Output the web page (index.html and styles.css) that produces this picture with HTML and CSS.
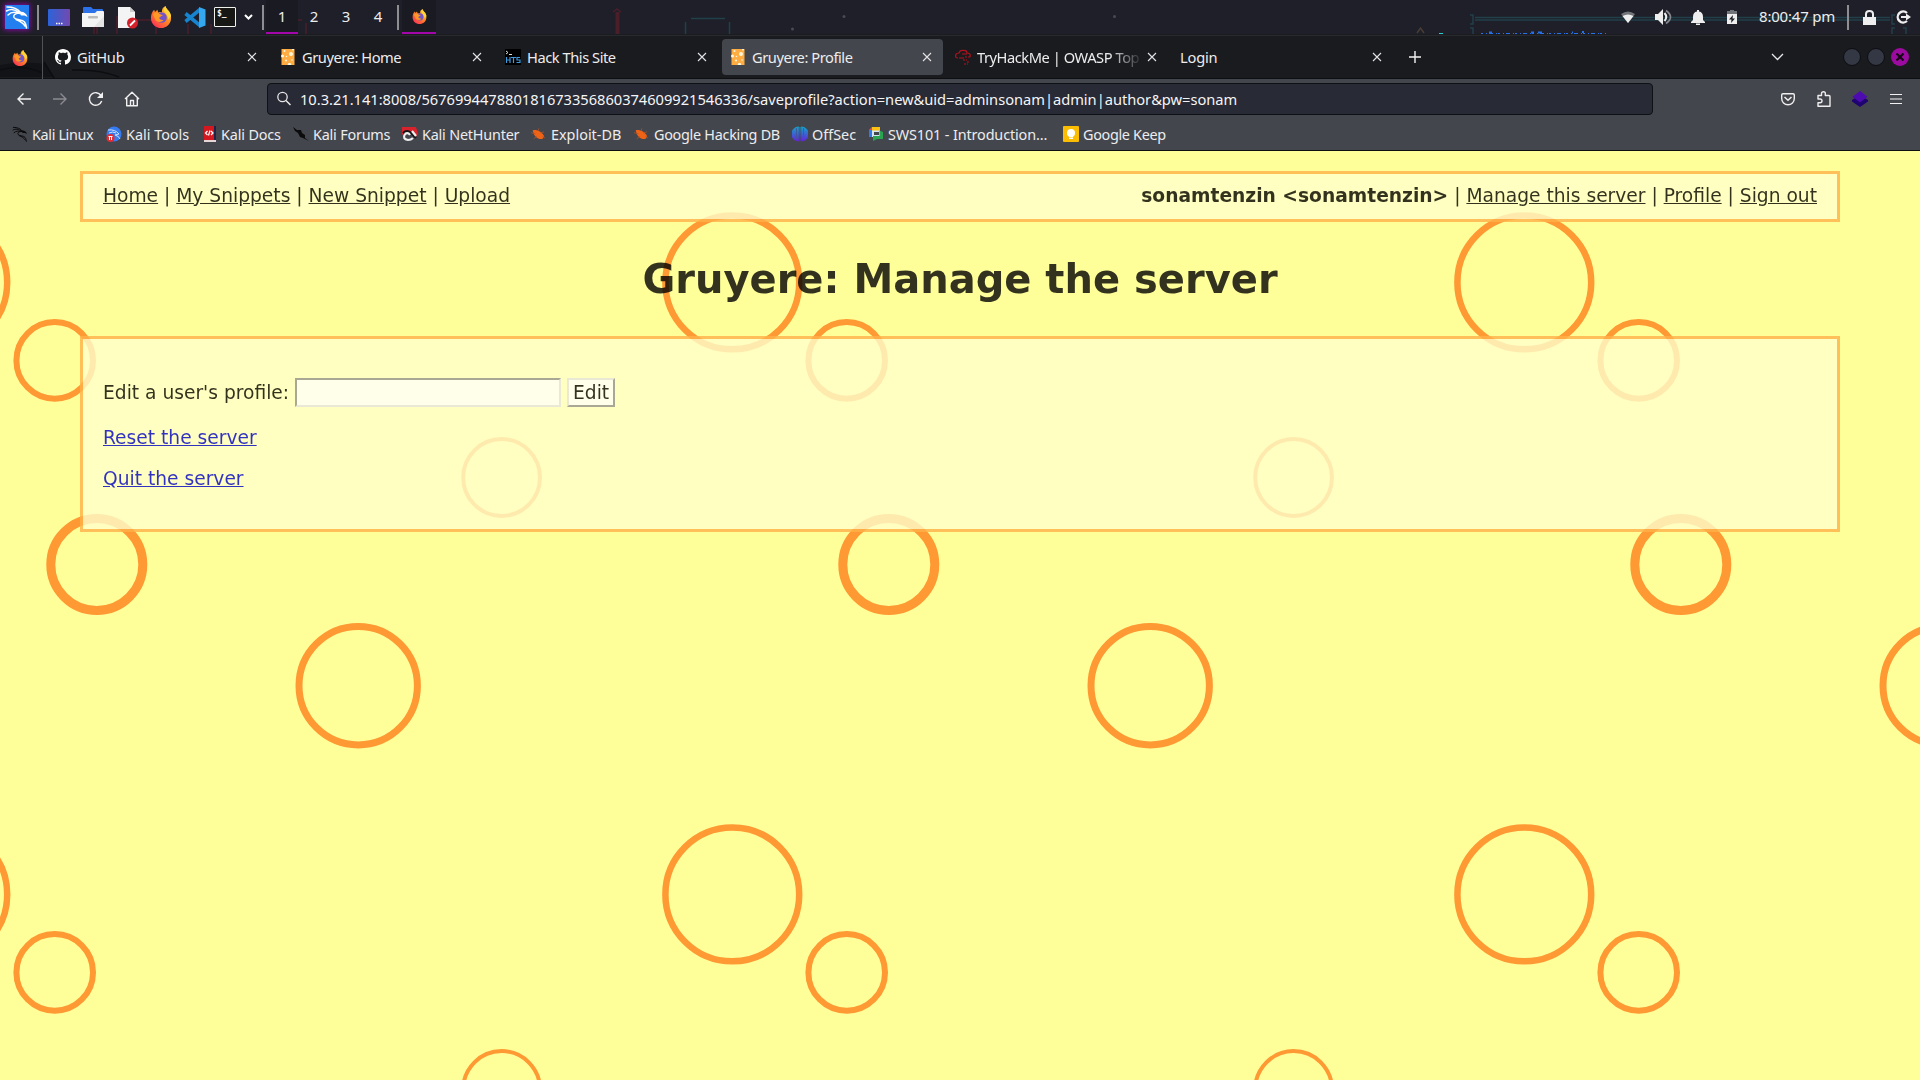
FILE: index.html
```html
<!DOCTYPE html>
<html lang="en">
<head>
<meta charset="utf-8">
<title>Gruyere: Profile</title>
<link rel="stylesheet" href="styles.css">
</head>
<body>
<svg class="defs" width="0" height="0" aria-hidden="true">
  <defs>
    <linearGradient id="fxg" x1="1" y1="0" x2="0.2" y2="1"><stop offset="0" stop-color="#ffdf42"/><stop offset=".5" stop-color="#ff8a22"/><stop offset="1" stop-color="#fa2f58"/></linearGradient>
    <linearGradient id="desk" x1="0" y1="0" x2="1" y2="0"><stop offset="0" stop-color="#2c63d9"/><stop offset="1" stop-color="#7349b0"/></linearGradient>
    <linearGradient id="offg" x1="0" y1="0" x2="0" y2="1"><stop offset="0" stop-color="#12a5c9"/><stop offset="1" stop-color="#6522d8"/></linearGradient>
    <symbol id="firefox" viewBox="0 0 24 24">
      <path fill="url(#fxg)" d="M23 13C23 19.500 18 24 12 24S1 19.500 1 13C1 9 2.500 6 4.500 4L5.500 6.500L8 4L9 7C11 6.500 12 6.500 13 7C12.500 3.500 14.500 1 17 0C17 2.500 19 3.500 21 6C22.500 8 23 10 23 13Z"/>
      <circle cx="12.500" cy="12.500" r="5.800" fill="#7155c9"/>
      <path fill="#ff9725" d="M3 9C6 6 9 7 11 9L14 10L11 12C9 13 11 16 15 15C12 19 6 18 5 13Z"/>
      <path fill="#ffd43a" d="M17 0C17 3 22 6 23 11L20 15C20 9 15 7 15 4Z"/>
    </symbol>
    <symbol id="dragon" viewBox="0 0 24 24">
      <path fill="none" stroke="currentColor" stroke-width="1.500" stroke-linecap="round" d="M2 2C8 2 13 4 15.500 7.500M1.500 6C5 4 10 4 14.500 8M3 10C6 7 11 7 15 8.500M14 8C10 8.500 8 10 9 12.500C10.500 15.500 17 14 19.500 17C21 19 21 21 21.500 23M11 14.500C15 16 18 18 20 21"/>
      <path fill="currentColor" d="M14 7C18 6 21.500 8 22.500 12L19.500 10.500L16 10.500Z"/>
    </symbol>
    <symbol id="cheese" viewBox="0 0 13 16">
      <rect width="13" height="16" fill="#ffad42"/>
      <g fill="#fff6d8"><circle cx="3" cy="2" r="1"/><circle cx="9.500" cy="5" r="2"/><circle cx="1" cy="7" r="1.500"/><circle cx="5" cy="7.500" r=".8"/><circle cx="4.500" cy="11.500" r="1.100"/><circle cx="10.500" cy="11" r=".8"/><circle cx="8" cy="15.500" r="1.700"/><circle cx="11.500" cy=".6" r="1"/></g>
    </symbol>
    <symbol id="close" viewBox="0 0 10 10"><path stroke="#e4e4e6" stroke-width="1.100" d="M1 1L9 9M9 1L1 9"/></symbol>
    <symbol id="bug" viewBox="0 0 16 14"><path fill="#ee6315" d="M2 2C7 1 13 4 15 9L13 12C8 13 3 9 2 2Z"/><path stroke="#b4552a" d="M0 5L5 6M3 12L7 9M8 3L9 0M11 5L15 4M13 9L16 11" stroke-width=".8"/></symbol>
  </defs>
</svg>

<header class="panel">
  <svg class="wall" width="1920" height="35" viewBox="0 0 1920 35" aria-hidden="true">
    <g fill="none" stroke="#4b1f2a" stroke-width="1.500"><path d="M94 24V34M97 24V34M117 34V17H122M137 20H152M156 24V34M188 24V34M211 24V34M280 31L286 20H302M306 23V34"/><path stroke-width="4" d="M617.500 12V34"/><path d="M613 12L617 9L621 12"/></g>
    <g fill="none" stroke="#22404a" stroke-width="1.500"><path d="M691 18.500H725M685.500 22V34M729.500 22V34"/><path d="M1475 17.500H1890M1475 20H1890M1470 15H1473V24H1470M1470 28H1473V34M1895 15H1892V24H1895M1895 28H1892V34M1903 28H1906V34"/></g>
    <path stroke="#2571e8" stroke-width="1" stroke-dasharray="2 3 1 2 4 3 1 1" d="M1481 33.500H1607"/>
    <path stroke="#2571e8" stroke-width="2" d="M1489 32.500H1492M1531 32.500H1534M1538 32.500H1542M1572 32.500H1573M1582 32H1584"/>
    <path stroke="#29cfcd" d="M1439 33.500H1443"/><path fill="none" stroke="#493c36" stroke-width="1.500" d="M1417 33L1420.500 28L1424 33"/>
    <g fill="#484b52"><circle cx="792.500" cy="29" r="1.500"/><circle cx="844" cy="16.500" r="1.500"/><circle cx="1114.500" cy="16.500" r="1.500"/></g>
  </svg>
  <div class="launchers">
    <span class="kali"><svg width="24" height="24"><use href="#dragon"/></svg></span>
    <i class="vbar"></i>
    <svg class="l-desk" width="22" height="17"><rect width="22" height="17" rx="1" fill="url(#desk)"/><path stroke="#fff" stroke-width="1.300" stroke-dasharray="1.500 1" d="M8 14.500H15"/></svg>
    <svg class="l-files" width="22" height="20"><path fill="#2d71e8" d="M1 1Q1 0 2 0H9L11 2H20Q21 2 21 3V8H1Z"/><path fill="#f4f4f4" d="M0 6H13L15 4H21Q22 4 22 5V20H0Z"/><path fill="#e4e4e4" d="M22 9V20H12Z"/><rect x="6" y="9" width="10" height="2.500" rx="1" fill="#bbb"/></svg>
    <svg class="l-text" width="21" height="23"><path fill="#f4f4f4" d="M0 1H12L17 6V22H0Z"/><path fill="#ccc" d="M12 1V6H17Z"/><circle cx="14.500" cy="17" r="5.500" fill="#d3202b"/><path stroke="#fff" stroke-width="1.800" d="M12 19.500L17 14.500"/></svg>
    <svg class="l-fox" width="22" height="22"><use href="#firefox"/></svg>
    <svg class="l-code" width="22" height="21" viewBox="0 0 22 21"><path fill="none" stroke="#1684cf" stroke-width="3.600" stroke-linejoin="round" d="M1.500 6.500L16 18.500M1.500 14.500L16 2.500"/><path fill="#35a7ee" d="M15 0L21.500 2.500V18.500L15 21Z"/></svg>
    <span class="term">$_</span>
    <svg class="l-down" width="9" height="6"><path fill="none" stroke="#fff" stroke-width="2" d="M1 1L4.500 4.500L8 1"/></svg>
    <i class="vbar"></i>
  </div>
  <nav class="spaces"><span class="on">1</span><span>2</span><span>3</span><span>4</span></nav>
  <i class="vbar spacebar"></i>
  <span class="task"><svg width="15" height="15"><use href="#firefox"/></svg></span>
  <div class="tray">
    <svg width="14" height="12"><path fill="#717479" d="M0 3Q7-2 14 3L7 12Z"/><path fill="#eee" d="M1.500 5Q7 2 12.500 5L7 12Z"/></svg>
    <svg class="t-vol" width="17" height="16"><path fill="#eee" d="M0 5H3L8 0V16L3 11H0Z"/><path fill="none" stroke="#eee" stroke-width="2" d="M9.500 4Q13 8 9.500 12"/><path fill="none" stroke="#84878b" stroke-width="1.700" d="M11 1.500Q20 8 11 14.500"/></svg>
    <svg class="t-bell" width="14" height="15"><path fill="#eee" d="M6 0H8V1.500Q12 2 12 7V10L14 12V13H0V12L2 10V7Q2 2 6 1.500ZM5 13.500H9V15H5Z"/></svg>
    <svg class="t-bat" width="10" height="14"><path fill="#717479" d="M3 0H7V1H10V4H0V1H3Z"/><path fill="#eee" d="M0 4H10V14H0Z"/><path fill="#1e1f27" d="M6 5L2 9.500H4.500L4 13L8 8.500H5.500Z"/></svg>
    <span class="clock">8:00:47 pm</span>
    <i class="vbar"></i>
    <svg class="t-lock" width="13" height="15"><path fill="#eee" d="M0 7H13V15H0Z"/><path fill="none" stroke="#eee" stroke-width="2" d="M3 8V4Q3 1 6.500 1T10 4V8"/></svg>
    <svg class="t-out" width="15" height="14"><path fill="none" stroke="#eee" stroke-width="2.400" d="M11 3A5.500 5.500 0 1 0 11 11"/><path fill="#eee" d="M5 6H10V3.500L15 7L10 10.500V8H5Z"/></svg>
  </div>
</header>

<div class="tabs">
  <svg class="shade" width="120" height="17" aria-hidden="true"><path fill="#121317" d="M0 4Q20 0 46 3L54 16H0Z"/><path fill="none" stroke="#0d0e11" stroke-width="1.500" d="M0 9Q24 3 42 12M44 1L54 17M72 9Q100 8 119 16"/></svg>
  <div class="view"><svg width="16" height="16"><use href="#firefox"/></svg></div>
  <div class="tab first"><svg width="16" height="16" viewBox="0 0 16 16"><path fill="#fff" d="M8 0C3.580 0 0 3.580 0 8c0 3.540 2.290 6.530 5.470 7.590.4.070.55-.17.55-.38 0-.19-.01-.82-.01-1.490-2.010.37-2.530-.49-2.690-.94-.09-.23-.48-.94-.82-1.130-.28-.15-.68-.52-.01-.53.63-.01 1.080.58 1.230.82.72 1.210 1.870.87 2.330.66.07-.52.28-.87.51-1.070-1.780-.2-3.640-.89-3.640-3.950 0-.87.31-1.590.82-2.150-.08-.2-.36-1.020.08-2.120 0 0 .67-.21 2.200.82.64-.18 1.320-.27 2-.27s1.360.09 2 .27c1.530-1.040 2.200-.82 2.200-.82.44 1.100.16 1.920.08 2.120.51.56.82 1.270.82 2.150 0 3.070-1.870 3.750-3.650 3.950.29.25.54.73.54 1.480 0 1.070-.01 1.930-.01 2.200 0 .21.15.46.55.38A8.010 8.010 0 0 0 16 8c0-4.420-3.580-8-8-8Z"/></svg><span>GitHub</span><svg class="x" width="10" height="10"><use href="#close"/></svg></div>
  <div class="tab"><svg width="16" height="16"><use href="#cheese"/></svg><span>Gruyere: Home</span><svg class="x" width="10" height="10"><use href="#close"/></svg></div>
  <div class="tab"><svg width="16" height="16"><rect width="16" height="16" fill="#000"/><path fill="none" stroke="#ddd" d="M1 2L3 3.500L1 5M4 5.500H7"/><path fill="none" stroke="#3f9ade" stroke-width="1.200" d="M1.500 8V14M5 8V14M1.500 11H5M6 8.500H11M8.500 8.500V14M15 8.500H12V11H15V13.500H11.500"/></svg><span>Hack This Site</span><svg class="x" width="10" height="10"><use href="#close"/></svg></div>
  <div class="tab active"><svg width="16" height="16"><use href="#cheese"/></svg><span>Gruyere: Profile</span><svg class="x" width="10" height="10"><use href="#close"/></svg></div>
  <div class="tab"><svg width="16" height="16"><path fill="none" stroke="#b5121d" stroke-width="1.200" d="M3 9Q0 9 .8 6Q1 4 4 4Q5 1 8 1.500Q12 1 12 4Q16 4 15 8M4 9H9M7 5H12"/><path stroke="#b5121d" stroke-dasharray="2 1" d="M10 8H15M8 11H12M12 13H15M9 15H13"/></svg><span class="fade">TryHackMe | OWASP Top</span><svg class="x" width="10" height="10"><use href="#close"/></svg></div>
  <div class="tab plain"><span>Login</span><svg class="x" width="10" height="10"><use href="#close"/></svg></div>
  <svg class="plus" width="12" height="12"><path stroke="#f3f3f4" stroke-width="1.400" d="M6 0V12M0 6H12"/></svg>
  <div class="winctl">
    <svg class="all" width="13" height="8"><path fill="none" stroke="#e8e8ea" stroke-width="1.300" d="M1 1L6.500 6.500L12 1"/></svg>
    <i></i><i></i><b><svg width="8" height="8"><path stroke="#120712" stroke-width="2.200" d="M.5.5L7.500 7.500M7.500.5L.5 7.500"/></svg></b>
  </div>
</div>

<div class="toolbar">
  <div class="navbtns">
    <svg width="16" height="16"><path fill="none" stroke="#f1f1f2" stroke-width="1.400" d="M15 8H2M7.500 2.500L2 8L7.500 13.500"/></svg>
    <svg width="16" height="16"><path fill="none" stroke="#8b8c91" stroke-width="1.400" d="M1 8H14M8.500 2.500L14 8L8.500 13.500"/></svg>
    <svg width="16" height="16"><path fill="none" stroke="#f1f1f2" stroke-width="1.400" d="M13.700 10A6.300 6.300 0 1 1 13 4.500"/><path fill="#f1f1f2" d="M15 1V7H9Z"/></svg>
    <svg width="16" height="16"><path fill="none" stroke="#f1f1f2" stroke-width="1.400" stroke-linejoin="round" d="M1 8L8 1.300L15 8M2.700 7V14.700H13.300V7M6.500 14V9.500H9.500V14"/></svg>
  </div>
  <div class="url"><svg width="16" height="16"><circle cx="6.500" cy="6" r="4.700" fill="none" stroke="#e7e7e9" stroke-width="1.300"/><path stroke="#e7e7e9" stroke-width="1.500" d="M10 9.500L14.500 14"/></svg><span>10.3.21.141:8008/567699447880181673356860374609921546336/saveprofile?action=new&amp;uid=adminsonam|admin|author&amp;pw=sonam</span></div>
  <div class="ext">
    <svg width="16" height="16"><path fill="none" stroke="#eee" stroke-width="1.400" d="M3 2.700H13Q14.300 2.700 14.300 4V7.500A6.300 6.300 0 0 1 1.700 7.500V4Q1.700 2.700 3 2.700Z"/><path fill="none" stroke="#eee" stroke-width="1.500" d="M4.500 6L8 9.300L11.500 6"/></svg>
    <svg width="16" height="16"><path fill="none" stroke="#eee" stroke-width="1.400" stroke-linejoin="round" d="M2 4.500H5.500V2.500Q5.500.8 7.500.8T9.300 2.500V4.500H13Q14 4.500 14 5.500V15.200H2V11.700H4Q6 11.700 6 9.800T4 8H2Z"/></svg>
    <svg width="16" height="16"><path fill="#1f0371" d="M0 9L8 4L16 9V10.500L8 16L0 10.500Z"/><path fill="#4d0bb0" d="M8 0L15.500 5.800L8 11.500L.5 5.800Z"/></svg>
    <svg width="16" height="16"><path stroke="#f1f1f2" stroke-width="1.200" d="M2 3.500H14M2 8H14M2 12.500H14"/></svg>
  </div>
</div>

<div class="marks">
  <span class="b1"><svg class="dark" width="16" height="16"><use href="#dragon"/></svg>Kali Linux</span>
  <span class="b2"><svg width="16" height="16"><circle cx="8" cy="8" r="7.500" fill="#367bf0"/><path fill="none" stroke="#cfe0fb" d="M2 4Q9 3 13 8L9 9Q13 10 14 13M3 7Q7 5 10 7"/><circle cx="4.500" cy="12" r="4" fill="#e32c34"/><path stroke="#fff" d="M2.500 10.500H6.500M3.500 10.500V14M5.500 10.500V14"/></svg>Kali Tools</span>
  <span class="b3"><svg width="14" height="16"><path fill="#1e2548" d="M10 0H13V15H10Z"/><path fill="#d51820" d="M1 0H11V14H1Z"/><path fill="#e7d6d8" d="M1 14H13V16H1Z"/><path fill="none" stroke="#fff" stroke-width="1.200" d="M4.500 5L2.500 7L4.500 9M8 5L10 7L8 9M7 4.500L5.500 9.500"/></svg>Kali Docs</span>
  <span class="b4"><svg width="16" height="16"><path fill="#0b0b0c" d="M0 1L4 4L8 4L9 7L12 9L12 12L16 15L10 12L7 11L5 7L2 5Z"/></svg>Kali Forums</span>
  <span class="b5"><svg width="16" height="16"><path fill="#d8222c" d="M0 1H14L16 8L13 12L8 5L3 6L0 9Z"/><path fill="none" stroke="#141415" stroke-width="2" d="M1 7Q5 3 9 7L14 12"/><path fill="none" stroke="#eee" stroke-width="2.200" d="M10 5L14 10M3 8Q0 13 6 14Q9 14 11 12M3 8Q6 6 8 9"/></svg>Kali NetHunter</span>
  <span class="b6"><svg width="14" height="13"><use href="#bug"/></svg>Exploit-DB</span>
  <span class="b7"><svg width="14" height="13"><use href="#bug"/></svg>Google Hacking DB</span>
  <span class="b8"><svg width="16" height="16"><path fill="url(#offg)" d="M6.800.5V15.500A7.500 7.500 0 0 1 6.800.5ZM9.200.5V15.500A7.500 7.500 0 0 0 9.200.5Z"/><path stroke="url(#offg)" d="M8 1L8.010 15"/><path stroke="#3d5793" stroke-width=".8" d="M4.500 2V13M11.500 2V13"/></svg>OffSec</span>
  <span class="b9"><svg width="14" height="14"><path fill="#d5e3f7" d="M3 3H11V10H3Z"/><path fill="#44464d" d="M5 5H10V8H5Z"/><path fill="#fbc014" d="M3 0H11V3.500H3Z"/><path fill="#3179e8" d="M0 3L3 0V10H0Z"/><path fill="#e8453c" d="M0 3L3 0V3Z"/><path fill="#2aa450" d="M10.500 3.500L14 5V12H8L4 14V9H10.500Z"/></svg>SWS101 - Introduction…</span>
  <span class="b10"><svg width="16" height="16"><rect width="16" height="16" rx="1" fill="#fbbc04"/><circle cx="8" cy="7" r="4" fill="#fff"/><path fill="#fff" d="M6 9H10V11H6ZM6 11.500H10V13H6Z"/></svg>Google Keep</span>
</div>

<main class="site">
  <svg class="holes" width="1920" height="929" aria-hidden="true">
    <defs>
      <g id="tile" fill="none" stroke="#ff9933">
        <circle cx="732.300" cy="131.400" r="66.900" stroke-width="6.500"/>
        <circle cx="54.700" cy="209.400" r="38.300" stroke-width="6"/>
        <circle cx="501.600" cy="326.500" r="38.400" stroke-width="4"/>
        <circle cx="96.800" cy="413.500" r="46" stroke-width="9"/>
        <circle cx="358.200" cy="534.700" r="59.200" stroke-width="7"/>
      </g>
    </defs>
    <use href="#tile" x="-792"/><use href="#tile"/><use href="#tile" x="792"/><use href="#tile" x="1584"/>
    <use href="#tile" x="-792" y="612"/><use href="#tile" y="612"/><use href="#tile" x="792" y="612"/><use href="#tile" x="1584" y="612"/>
  </svg>
  <div class="content">
    <div class="menu">
      <span><a>Home</a> | <a>My Snippets</a> | <a>New Snippet</a> | <a>Upload</a></span>
      <span><b>sonamtenzin &lt;sonamtenzin&gt;</b> | <a>Manage this server</a> | <a>Profile</a> | <a>Sign out</a></span>
    </div>
    <h1>Gruyere: Manage the server</h1>
    <div class="box">
      <p class="edit">Edit a user's profile: <input type="text"> <button>Edit</button></p>
      <p><a>Reset the server</a></p>
      <p><a>Quit the server</a></p>
    </div>
  </div>
</main>
</body>
</html>
```

FILE: styles.css
```css
* { box-sizing: border-box; }
body { margin: 0; width: 1920px; height: 1080px; overflow: hidden; display: flex; flex-direction: column; font-family: "Noto Sans", "DejaVu Sans", sans-serif; font-size: 14.667px; color: #ededee; background: #1a1b20; }
svg { display: block; flex: none; }
.defs { position: absolute; }

.panel { position: relative; flex: none; height: 35px; background: #1e1f28; border-bottom: 1px solid #1b1c20; display: flex; align-items: stretch; }
.wall { position: absolute; left: 0; top: 0; }
.panel > div, .panel > nav, .panel > span, .panel > i { position: relative; }
.vbar { flex: none; width: 2px; height: 25px; background: #8d8e92; align-self: center; }
.launchers { width: 266px; display: flex; align-items: center; padding-left: 5px; }
.kali { width: 24px; height: 24px; color: #fff; background: #237ff0; box-shadow: 0 0 5px 1px #8b08a2; margin-right: 8px; }
.l-desk { margin-left: 9px; }
.l-files { margin-left: 12px; }
.l-text { margin-left: 14px; }
.l-fox { margin-left: 11px; }
.l-code { margin-left: 12px; }
.term { flex: none; width: 22px; height: 20px; margin-left: 8px; border: 1px solid #f1f1ec; border-radius: 1px; background: #171716; font: bold 8px/10px "DejaVu Sans Mono", monospace; padding: 1px 2px; color: #fff; }
.l-down { margin: 0 9px 0 8px; }
.spaces { display: flex; font: 15px/33px "Noto Sans", sans-serif; }
.spaces span { width: 32px; text-align: center; }
.spaces .on { background: #1a1a22; border-bottom: 2px solid #a307aa; height: 34px; }
.spacebar { margin-left: 3px; }
.task { width: 34px; height: 34px; margin-left: 3px; padding: 9px 0 0 10px; border-bottom: 2px solid #a307aa; background: #1a1a22; }
.tray { margin-left: auto; display: flex; align-items: center; padding-right: 9px; }
.t-vol { margin-left: 20px; }
.t-bell { margin-left: 19px; }
.t-bat { margin-left: 22px; }
.clock { width: 76px; margin: -2px 12px 0 22px; font-size: 15px; letter-spacing: -.2px; white-space: nowrap; }
.t-lock { margin-left: 14px; }
.t-out { margin-left: 20px; }

.tabs { position: relative; flex: none; height: 44px; border-top: 1px solid #292a2d; border-bottom: 1px solid #0e0f11; background: #1a1b1f; display: flex; align-items: center; }
.shade { position: absolute; left: 0; bottom: 0; }
.view { width: 43px; height: 43px; border-right: 1px solid #515257; padding: 14px 0 0 12px; position: relative; }
.tab { position: relative; width: 221px; height: 36px; margin-right: 4px; padding: 0 11px 0 8px; display: flex; align-items: center; border-radius: 4px; }
.tab.first { margin-left: 4px; }
.tab span { margin-left: 6px; flex: 1; white-space: nowrap; letter-spacing: -.45px; }
.tab.first span { letter-spacing: -.2px; }
.tab.plain span { margin-left: 0; letter-spacing: -.2px; }
.tab.active { background: #44464d; }
.tab .fade { -webkit-mask-image: linear-gradient(90deg, #000 80%, transparent); mask-image: linear-gradient(90deg, #000 80%, transparent); }
.x { margin-left: 4px; }
.plus { margin-left: 12px; }
.winctl { margin-left: auto; display: flex; align-items: center; padding-right: 11px; gap: 6px; }
.winctl .all { margin-right: 53px; }
.winctl i { width: 18px; height: 18px; border-radius: 50%; background: #343845; border: 1px solid #0c0d0f; }
.winctl b { width: 18px; height: 18px; border-radius: 50%; background: #9c0b9f; display: grid; place-items: center; }

.toolbar { flex: none; height: 41px; background: #44464d; display: flex; align-items: center; padding: 0 0 1px 16px; }
.navbtns { display: flex; gap: 20px; width: 251px; }
.url { width: 1386px; height: 32px; border: 1px solid #101114; border-radius: 4px; background: #282a35; display: flex; align-items: center; padding-left: 8px; color: #f5f5f6; }
.url span { margin-left: 8px; white-space: nowrap; letter-spacing: -.02px; }
.ext { margin-left: auto; display: flex; gap: 20px; padding-right: 16px; }

.marks { flex: none; height: 31px; background: #44464d; border-bottom: 1px solid #0e0f11; display: flex; align-items: center; font-size: 14.400px; padding: 0 0 2px 12px; }
.marks span { flex: none; display: flex; align-items: center; gap: 4px; white-space: nowrap; }
.dark { color: #0b0b0c; }
.b1 { width: 94px; letter-spacing: -.35px; }
.b2 { width: 97px; }
.b3 { width: 90px; letter-spacing: -.15px; }
.b4 { width: 109px; letter-spacing: -.2px; }
.b5 { width: 129px; letter-spacing: -.2px; }
.b6 { width: 103px; }
.b6 svg, .b7 svg { margin-right: 2px; }
.b7 { width: 158px; letter-spacing: -.28px; }
.b8 { width: 77px; }
.b9 { width: 194px; letter-spacing: -.12px; }
.b9 svg { margin-right: 1px; }
.b10 { letter-spacing: -.32px; }

.site { position: relative; flex: 1; background: #ffff99; font: 18.667px/22px "DejaVu Sans", sans-serif; color: #000; }
.holes { position: absolute; left: 0; top: 0; }
.content { position: relative; opacity: .8; padding: 20px 80px 0; }
.menu, .box { border: 3px solid #ffb14a; background: #ffffcc; padding: 0 20px; }
.menu { height: 51px; display: flex; justify-content: space-between; padding-top: 11px; }
a { text-decoration: underline; }
h1 { margin: 35px 0 34px; font-size: 40px; line-height: 45px; text-align: center; }
.box { height: 196px; padding-top: 39px; }
.box a { color: #0000cc; }
.box p { margin: 0 0 19px; }
.box .edit { display: flex; align-items: center; height: 29px; margin-bottom: 20px; }
.box input { width: 266px; height: 29px; margin: 0 6px; border: 2px solid; border-color: #939393 #e4e4e4 #e4e4e4 #939393; background: #fff; }
.box button { width: 48px; height: 29px; padding: 0; border: 2px solid; border-color: #e4e4e4 #939393 #939393 #e4e4e4; background: #fff; font: inherit; color: inherit; }
```
